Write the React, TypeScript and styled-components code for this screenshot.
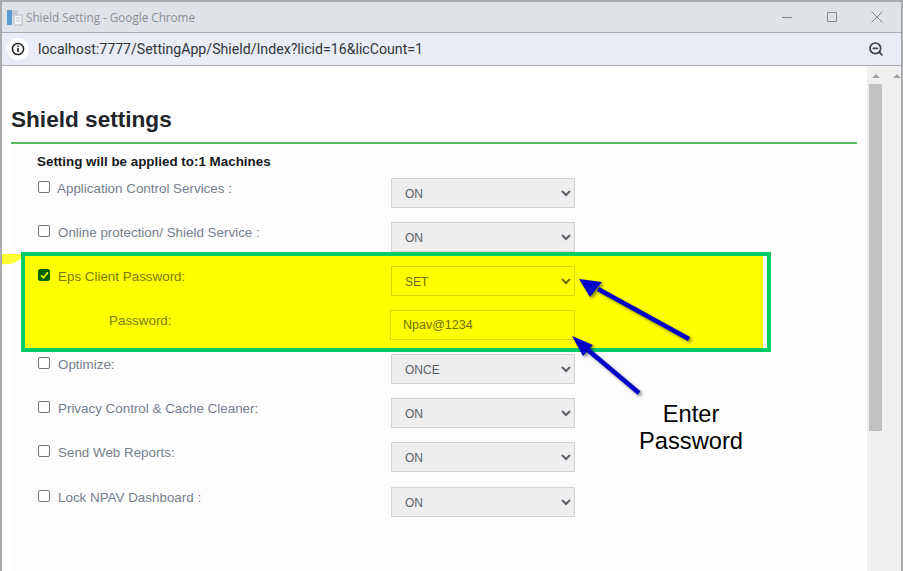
import { ZoomOut } from 'lucide-react';
import styled, { createGlobalStyle } from 'styled-components';

const GlobalStyle = createGlobalStyle`
  html, body {
    margin: 0;
    height: 100%;
    background: #fff;
    overflow: hidden;
    font-family: "Liberation Sans", Arial, sans-serif;
  }
`;

const Window = styled.div`
  position: relative;
  width: 903px;
  height: 571px;
  box-sizing: border-box;
  border-top: 2px solid #a9abae;
  border-left: 2px solid #a9abae;
  border-right: 2px solid #a9abae;
  display: flex;
  flex-direction: column;
  overflow: hidden;
`;

const TitleBar = styled.div`
  height: 30px;
  flex: none;
  display: flex;
  align-items: center;
  padding-left: 4px;
  background: #dfe3e8;
  border-bottom: 1px solid #a9abae;
`;

const Title = styled.span`
  margin-left: 3px;
  font: 11.7px "Open Sans", sans-serif;
  color: #8b8f94;
`;

const WindowControls = styled.div`
  margin-left: auto;
  margin-right: 2px;
  display: flex;
`;

const ControlButton = styled.div`
  width: 45px;
  height: 30px;
  display: flex;
  align-items: center;
  justify-content: center;
`;

const AddressBar = styled.div`
  height: 32px;
  flex: none;
  display: flex;
  align-items: center;
  padding-left: 5px;
  background: #e9ecf6;
  border-bottom: 1px solid #a9abae;
`;

const InfoBadge = styled.div`
  width: 22px;
  height: 22px;
  flex: none;
  border-radius: 50%;
  background: #fff;
  display: flex;
  align-items: center;
  justify-content: center;
`;

const Url = styled.span`
  margin-left: 9px;
  font: 14.15px Roboto, sans-serif;
  color: #33363a;
`;

const ZoomButton = styled.div`
  margin-left: auto;
  margin-right: 17px;
  display: flex;
  color: #3c4043;
`;

const Body = styled.div`
  flex: 1;
  min-height: 0;
  display: flex;
`;

const Page = styled.div`
  flex: 1;
  min-width: 0;
  padding: 40px 10px 0 9px;
`;

const Heading = styled.h1`
  margin: 0;
  padding-bottom: 8px;
  font-size: 22.6px;
  line-height: 28px;
  font-weight: 700;
  color: #212529;
`;

const Card = styled.div`
  height: 420px;
  background: #fdfdfd;
  border-top: 2px solid #5cb85c;
  padding: 10px 0 0 26px;
`;

const AppliedTo = styled.div`
  font-size: 13.4px;
  line-height: 16px;
  font-weight: 700;
  color: #16191c;
  margin-bottom: 8px;
`;

const Row = styled.div<{ $last?: boolean }>`
  display: grid;
  grid-template-columns: 354px 184px;
  height: 30px;
  margin-bottom: 14px;
  margin-top: ${({ $last }) => ($last ? '15px' : '0')};
`;

const LabelCell = styled.label<{ $gap: number; $indent?: number; $marked?: boolean }>`
  display: flex;
  align-items: flex-start;
  gap: ${({ $gap }) => $gap}px;
  padding-left: ${({ $indent }) => $indent ?? 0}px;
  font-size: 13.4px;
  line-height: 16px;
  padding-top: 3px;
  color: ${({ $marked }) => ($marked ? '#7c7c00' : '#75808f')};
`;

const Box = styled.input.attrs({ type: 'checkbox' })`
  appearance: none;
  position: relative;
  flex: none;
  width: 12px;
  height: 12px;
  margin: 0 0 0 1px;
  box-sizing: border-box;
  border: 1px solid #767676;
  border-radius: 2px;
  background: #fff;

  &:checked {
    border-color: #006400;
    background: #006400;
  }

  &:checked::after {
    content: '';
    position: absolute;
    left: 3px;
    top: 0;
    width: 3px;
    height: 7px;
    box-sizing: content-box;
    border: solid #ffff00;
    border-width: 0 2px 2px 0;
    transform: scale(0.85) rotate(40deg);
  }
`;

const Select = styled.select<{ $marked?: boolean }>`
  width: 184px;
  height: 30px;
  padding: 1px 9px 0;
  font: 12px "Liberation Sans", Arial, sans-serif;
  color: ${({ $marked }) => ($marked ? '#6f6f00' : '#5a6067')};
  background: ${({ $marked }) => ($marked ? '#ffff00' : '#eeeeee')};
  border: 1px solid ${({ $marked }) => ($marked ? '#d6d600' : '#ced4da')};
  border-radius: 0;
`;

const PasswordInput = styled.input`
  width: 185px;
  height: 30px;
  margin-left: -1px;
  box-sizing: border-box;
  padding: 0 12px;
  font: 12.5px "Liberation Sans", Arial, sans-serif;
  color: #6f6f00;
  background: #ffff00;
  border: 1px solid #d6d600;
  border-radius: 0;
`;

const Highlight = styled.div`
  width: 750px;
  height: 100px;
  box-sizing: border-box;
  margin: -14px 0 2px -16px;
  padding: 10px 0 0 12px;
  border: 4px solid #00cc66;
  background: linear-gradient(to right, #ffff00 738px, #ffffff 738px);

  ${Row}:last-child {
    margin-bottom: 0;
  }
`;

const Scrollbars = styled.div`
  width: 34px;
  flex: none;
  background: #f0f0f0;
  display: flex;
  padding: 8px 0 0 2px;
  box-sizing: border-box;
`;

const ScrollTrack = styled.div`
  width: 13px;
  display: flex;
  flex-direction: column;
  align-items: center;
`;

const ScrollArrow = styled.div`
  width: 0;
  height: 0;
  border-left: 4px solid transparent;
  border-right: 4px solid transparent;
  border-bottom: 4px solid #a3a3a3;
`;

const ScrollThumb = styled.div`
  width: 13px;
  height: 347px;
  margin-top: 6px;
  background: #c1c1c1;
`;

const SecondTrack = styled(ScrollTrack)`
  margin-left: 10px;
`;

const Annotations = styled.svg`
  position: absolute;
  left: -2px;
  top: -2px;
  pointer-events: none;
`;

const Callout = styled.div`
  position: absolute;
  left: 619px;
  top: 399px;
  width: 140px;
  text-align: center;
  font-size: 23.7px;
  line-height: 27px;
  color: #000;
`;

const rows = [
  { name: 'Application Control Services :', value: 'ON', gap: 7 },
  { name: 'Online protection/ Shield Service :', value: 'ON', gap: 8 },
];

const lowerRows = [
  { name: 'Optimize:', value: 'ONCE' },
  { name: 'Privacy Control & Cache Cleaner:', value: 'ON' },
  { name: 'Send Web Reports:', value: 'ON' },
];

function PageIcon() {
  return (
    <svg width="17" height="17" viewBox="0 0 17 17">
      <rect x="1" y="1" width="5" height="15" fill="#5d9bd5" />
      <rect x="6" y="1" width="6" height="6" fill="#c9ced4" />
      <rect x="8" y="6" width="8" height="10" fill="#f4f5f7" stroke="#b4b9bf" />
      <path d="M10 9h4M10 12h4" stroke="#c2c6cb" />
    </svg>
  );
}

function InfoIcon() {
  return (
    <svg width="14" height="14" viewBox="0 0 14 14">
      <circle cx="7" cy="7" r="5.6" fill="none" stroke="#1f2023" strokeWidth="1.5" />
      <rect x="6.2" y="6" width="1.6" height="4" fill="#1f2023" />
      <rect x="6.2" y="3.6" width="1.6" height="1.5" fill="#1f2023" />
    </svg>
  );
}

function ControlGlyph({ d }: { d: string }) {
  return (
    <svg width="12" height="12" viewBox="0 0 12 12">
      <path d={d} fill="none" stroke="#85888c" strokeWidth="1" />
    </svg>
  );
}

export default function App() {
  return (
    <>
      <GlobalStyle />
      <Window>
        <TitleBar>
          <PageIcon />
          <Title>Shield Setting - Google Chrome</Title>
          <WindowControls>
            <ControlButton>
              <ControlGlyph d="M1 6.5h10" />
            </ControlButton>
            <ControlButton>
              <ControlGlyph d="M1.5 1.5h9v9h-9z" />
            </ControlButton>
            <ControlButton>
              <ControlGlyph d="M.5 .5l11 11M11.5 .5l-11 11" />
            </ControlButton>
          </WindowControls>
        </TitleBar>
        <AddressBar>
          <InfoBadge>
            <InfoIcon />
          </InfoBadge>
          <Url>localhost:7777/SettingApp/Shield/Index?licid=16&amp;licCount=1</Url>
          <ZoomButton>
            <ZoomOut size={16} strokeWidth={2.6} />
          </ZoomButton>
        </AddressBar>
        <Body>
          <Page>
            <Heading>Shield settings</Heading>
            <Card>
              <AppliedTo>Setting will be applied to:1 Machines</AppliedTo>
              {rows.map((row) => (
                <Row key={row.name}>
                  <LabelCell $gap={row.gap}>
                    <Box />
                    {row.name}
                  </LabelCell>
                  <Select defaultValue={row.value}>
                    <option>ON</option>
                    <option>OFF</option>
                  </Select>
                </Row>
              ))}
              <Highlight>
                <Row>
                  <LabelCell $gap={8} $marked>
                    <Box defaultChecked />
                    Eps Client Password:
                  </LabelCell>
                  <Select $marked defaultValue="SET">
                    <option>SET</option>
                  </Select>
                </Row>
                <Row>
                  <LabelCell $gap={0} $indent={72} $marked>
                    Password:
                  </LabelCell>
                  <PasswordInput defaultValue="Npav@1234" />
                </Row>
              </Highlight>
              {lowerRows.map((row) => (
                <Row key={row.name}>
                  <LabelCell $gap={8}>
                    <Box />
                    {row.name}
                  </LabelCell>
                  <Select defaultValue={row.value}>
                    <option>ON</option>
                    <option>ONCE</option>
                  </Select>
                </Row>
              ))}
              <Row $last>
                <LabelCell $gap={8}>
                  <Box />
                  Lock NPAV Dashboard :
                </LabelCell>
                <Select defaultValue="ON">
                  <option>ON</option>
                </Select>
              </Row>
            </Card>
          </Page>
          <Scrollbars>
            <ScrollTrack>
              <ScrollArrow />
              <ScrollThumb />
            </ScrollTrack>
            <SecondTrack>
              <ScrollArrow />
            </SecondTrack>
          </Scrollbars>
        </Body>
        <Annotations width="903" height="571" viewBox="0 0 903 571">
          <path d="M0 254 L21 254 L21 259 L14 263 Q6 265 0 264 Z" fill="#ffff33" />
          <g style={{ filter: 'drop-shadow(2px 2px 1.5px rgba(0,0,0,0.45))' }}>
            <path d="M598 289 L689 339" stroke="#0000c8" strokeWidth="4.5" fill="none" />
            <path d="M588 350 L639 393" stroke="#0000c8" strokeWidth="4.5" fill="none" />
            <path d="M579 279 L602 282 L590 297 Z" fill="#0000c8" />
            <path d="M572 336 L593 345 L583 356 Z" fill="#0000c8" />
          </g>
        </Annotations>
        <Callout>
          Enter
          <br />
          Password
        </Callout>
      </Window>
    </>
  );
}
